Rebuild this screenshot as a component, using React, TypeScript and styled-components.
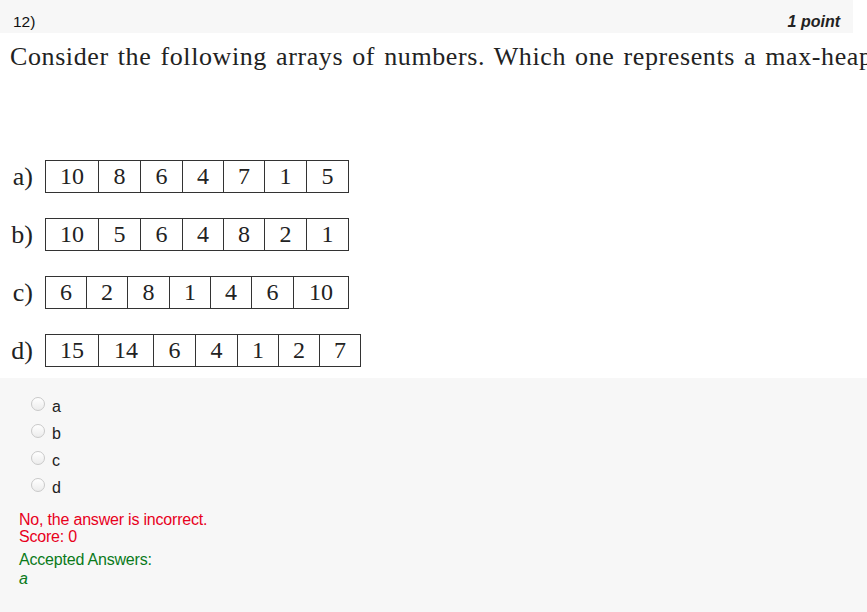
import React from "react";
import styled, { createGlobalStyle } from "styled-components";

const Global = createGlobalStyle`
  html, body { margin: 0; padding: 0; background: #ffffff; }
  body { width: 867px; height: 612px; overflow: hidden; font-family: "Liberation Sans", Arial, sans-serif; }
`;

const Page = styled.div`
  width: 867px;
  height: 612px;
  display: flex;
  flex-direction: column;
`;

const Header = styled.div`
  width: 853px;
  height: 33px;
  flex: none;
  background: #f7f7f7;
  display: flex;
  align-items: flex-end;
  justify-content: space-between;
  padding: 0 13px 2px 13px;
  box-sizing: border-box;
  font-size: 15.5px;
  color: #111;
`;

const Points = styled.span`
  font-weight: bold;
  font-style: italic;
  font-size: 16px;
  color: #222;
`;

const Question = styled.div`
  height: 345px;
  flex: none;
  overflow: hidden;
  display: flex;
  flex-direction: column;
  font-family: "Liberation Serif", "Times New Roman", serif;
  color: #222;
`;

const Prompt = styled.div`
  white-space: nowrap;
  overflow: hidden;
  font-size: 26px;
  line-height: 30px;
  padding: 9px 0 0 10px;
  letter-spacing: 0.6px;
  word-spacing: 2px;
`;

const Rows = styled.div`
  display: flex;
  flex-direction: column;
  gap: 25px;
  margin-top: 88px;
`;

const Row = styled.div`
  display: flex;
  align-items: center;
  height: 33px;
`;

const Label = styled.span`
  width: 33px;
  margin-right: 12px;
  text-align: right;
  font-size: 26px;
  line-height: 33px;
`;

const Cells = styled.div`
  display: flex;
  border: 1.3px solid #333;
  height: 33px;
  box-sizing: border-box;
`;

const Cell = styled.div<{ $w: number }>`
  width: ${(p) => p.$w}px;
  box-sizing: border-box;
  border-right: 1.3px solid #333;
  display: flex;
  align-items: center;
  justify-content: center;
  font-size: 24px;
  &:last-child { border-right: none; }
`;

const Answers = styled.div`
  background: #f7f7f7;
  flex: 1 0 auto;
  padding-top: 15px;
  box-sizing: border-box;
  font-size: 16px;
  letter-spacing: -0.2px;
`;

const Option = styled.div`
  display: flex;
  align-items: center;
  height: 27px;
  padding-left: 31px;
  color: #222;
`;

const Radio = styled.span`
  width: 14px;
  height: 14px;
  border-radius: 50%;
  box-sizing: border-box;
  border: 1px solid #c9c9c9;
  background: linear-gradient(#ffffff, #ececec);
  margin-right: 7px;
  margin-top: -5px;
`;

const Feedback = styled.div`
  padding: 11px 0 0 19px;
`;

const Wrong = styled.div`
  color: #e8001c;
  line-height: 16.5px;
`;

const Accepted = styled.div`
  color: #0a7a1a;
  line-height: 19px;
  margin-top: 5px;
`;

const AcceptedValue = styled.div`
  color: #0a7a1a;
  font-style: italic;
  line-height: 19px;
`;

type ArrRow = { label: string; cells: [string, number][] };

const rows: ArrRow[] = [
  { label: "a)", cells: [["10", 53], ["8", 42], ["6", 42], ["4", 41], ["7", 41], ["1", 42], ["5", 41]] },
  { label: "b)", cells: [["10", 53], ["5", 42], ["6", 42], ["4", 41], ["8", 41], ["2", 42], ["1", 41]] },
  { label: "c)", cells: [["6", 41], ["2", 41], ["8", 42], ["1", 41], ["4", 41], ["6", 42], ["10", 54]] },
  { label: "d)", cells: [["15", 53], ["14", 55], ["6", 42], ["4", 42], ["1", 41], ["2", 41], ["7", 40]] },
];

export default function App() {
  return (
    <Page>
      <Global />
      <Header>
        <span>12)</span>
        <Points>1 point</Points>
      </Header>
      <Question>
        <Prompt>Consider the following arrays of numbers. Which one represents a max-heap?</Prompt>
        <Rows>
          {rows.map((r) => (
            <Row key={r.label}>
              <Label>{r.label}</Label>
              <Cells>
                {r.cells.map(([v, w], i) => (
                  <Cell key={i} $w={w}>{v}</Cell>
                ))}
              </Cells>
            </Row>
          ))}
        </Rows>
      </Question>
      <Answers>
        {["a", "b", "c", "d"].map((o) => (
          <Option key={o}>
            <Radio />
            <span>{o}</span>
          </Option>
        ))}
        <Feedback>
          <Wrong>No, the answer is incorrect.</Wrong>
          <Wrong>Score: 0</Wrong>
          <Accepted>Accepted Answers:</Accepted>
          <AcceptedValue>a</AcceptedValue>
        </Feedback>
      </Answers>
    </Page>
  );
}
